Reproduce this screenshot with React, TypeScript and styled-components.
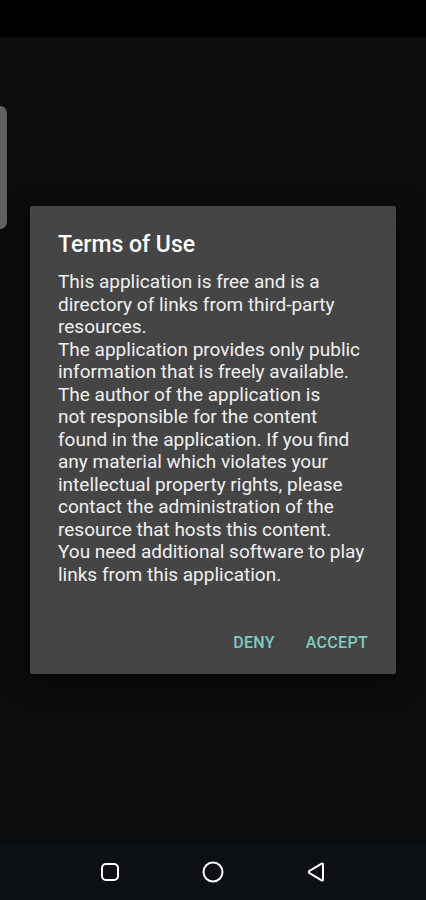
import React from 'react';
import styled, { createGlobalStyle } from 'styled-components';

const GlobalStyle = createGlobalStyle`
  html, body {
    margin: 0;
    padding: 0;
    background: #0b0c0e;
  }
  body {
    font-family: Roboto, "Noto Sans", sans-serif;
  }
`;

const Screen = styled.div`
  display: flex;
  flex-direction: column;
  width: 426px;
  height: 900px;
  background: #0b0c0e;
`;

const StatusBar = styled.div`
  height: 37px;
  background: #000;
`;

const Content = styled.div`
  position: relative;
  flex: 1;
  padding-top: 169px;
`;

const DrawerHandle = styled.div`
  position: absolute;
  left: 0;
  top: 69px;
  width: 7px;
  height: 123px;
  background: #5f6261;
  border-radius: 0 8px 8px 0;
`;

const Dialog = styled.div`
  display: flex;
  flex-direction: column;
  margin: 0 30px;
  height: 468px;
  box-sizing: border-box;
  padding: 25px 0 14px;
  background: #454545;
  border-radius: 2px;
  box-shadow: 0 6px 24px rgba(0, 0, 0, 0.6);
`;

const Title = styled.h2`
  margin: 0 28px;
  font-size: 23px;
  line-height: 28px;
  font-weight: 500;
  color: #ffffff;
`;

const Message = styled.p`
  flex: 1;
  margin: 12px 28px 0;
  font-size: 19px;
  line-height: 22.5px;
  color: #f0f0f0;
  white-space: nowrap;
`;

const Actions = styled.div`
  display: flex;
  justify-content: flex-end;
  gap: 15px;
  padding-right: 20px;
`;

const ActionButton = styled.button`
  height: 36px;
  padding: 0 8px;
  border: none;
  background: transparent;
  font-family: Roboto, sans-serif;
  font-size: 16px;
  font-weight: 500;
  letter-spacing: 0.3px;
  color: #80cbc4;
`;

const NavBar = styled.div`
  display: flex;
  align-items: center;
  justify-content: center;
  gap: 81px;
  height: 57px;
  background: #0e1114;
`;

const NavIcon = styled.svg`
  width: 22px;
  height: 22px;
  fill: none;
  stroke: #ffffff;
  stroke-width: 2;
  stroke-linejoin: round;
`;

const lines = [
  'This application is free and is a',
  'directory of links from third-party',
  'resources.',
  'The application provides only public',
  'information that is freely available.',
  'The author of the application is',
  'not responsible for the content',
  'found in the application. If you find',
  'any material which violates your',
  'intellectual property rights, please',
  'contact the administration of the',
  'resource that hosts this content.',
  'You need additional software to play',
  'links from this application.',
];

export default function App() {
  return (
    <Screen>
      <GlobalStyle />
      <StatusBar />
      <Content>
        <DrawerHandle />
        <Dialog>
          <Title>Terms of Use</Title>
          <Message>
            {lines.map((line, i) => (
              <React.Fragment key={i}>
                {line}
                {i < lines.length - 1 && <br />}
              </React.Fragment>
            ))}
          </Message>
          <Actions>
            <ActionButton>DENY</ActionButton>
            <ActionButton>ACCEPT</ActionButton>
          </Actions>
        </Dialog>
      </Content>
      <NavBar>
        <NavIcon viewBox="0 0 22 22">
          <rect x="3" y="3" width="16" height="16" rx="4" />
        </NavIcon>
        <NavIcon viewBox="0 0 22 22">
          <circle cx="11" cy="11" r="9.5" />
        </NavIcon>
        <NavIcon viewBox="0 0 22 22">
          <path d="M18 3.5 L18 18.5 Q18 20 16.7 19.3 L4.5 12.2 Q3.3 11 4.5 9.8 L16.7 2.7 Q18 2 18 3.5 Z" />
        </NavIcon>
      </NavBar>
    </Screen>
  );
}
